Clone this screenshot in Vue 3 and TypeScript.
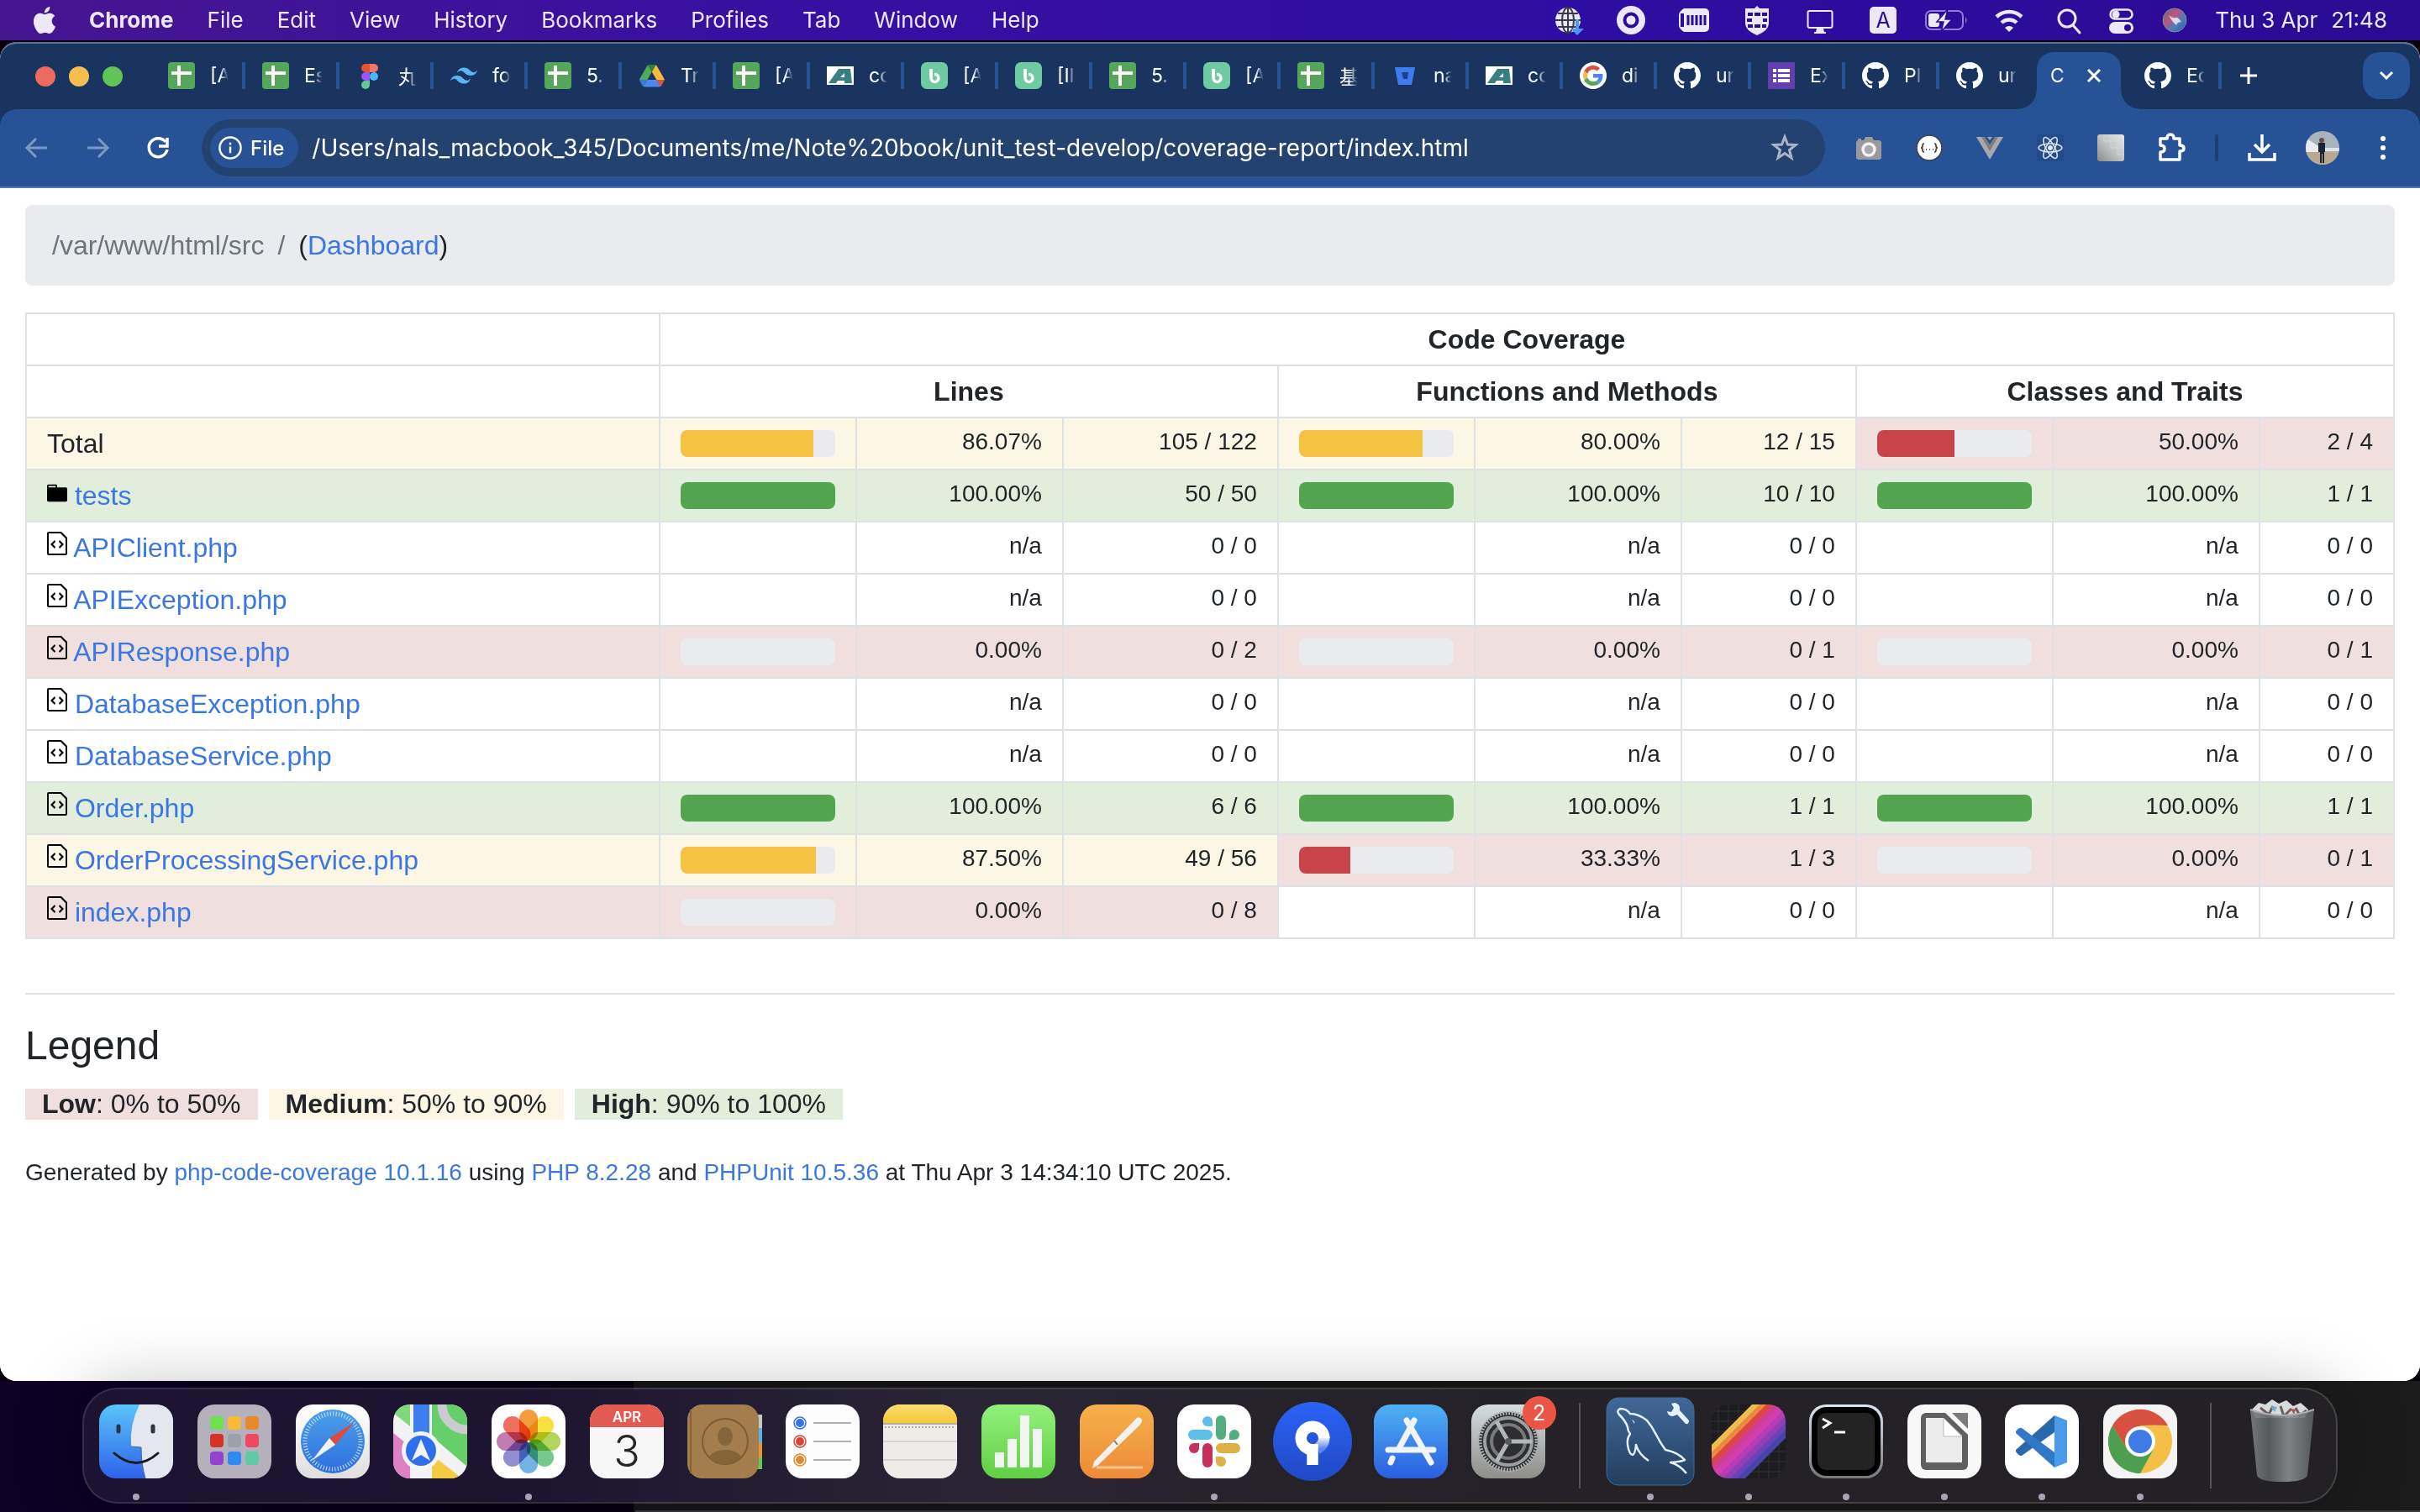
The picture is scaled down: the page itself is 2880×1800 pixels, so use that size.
<script setup lang="ts">
interface Tab { icon: string; title: string; active?: boolean; noSeparator?: boolean }
interface Metric { pct: string; count: string; level: '' | 'low' | 'medium' | 'high' }
interface Row { name: string; kind: 'total' | 'folder' | 'file'; level: string; metrics: Metric[] }
interface DockItem { icon: string; label: string; running?: boolean; badge?: string }

const menus = ['File', 'Edit', 'View', 'History', 'Bookmarks', 'Profiles', 'Tab', 'Window', 'Help']
const statusIcons = ['globe', 'ring', 'keyboard', 'shield', 'display', 'input', 'battery', 'wifi']
const systemIcons = ['search', 'control', 'siri']

const tabs: Tab[] = [
  { icon: 'sheets', title: '[A' }, { icon: 'sheets', title: 'Es' }, { icon: 'figma', title: '丸' },
  { icon: 'tailwind', title: 'fo' }, { icon: 'sheets', title: '5.' }, { icon: 'drive', title: 'Tr' },
  { icon: 'sheets', title: '[A' }, { icon: 'alpha', title: 'co' }, { icon: 'backlog', title: '[A' },
  { icon: 'backlog', title: '[II' }, { icon: 'sheets', title: '5.' }, { icon: 'backlog', title: '[A' },
  { icon: 'sheets', title: '基' }, { icon: 'bitbucket', title: 'na' }, { icon: 'alpha', title: 'co' },
  { icon: 'google', title: 'di' }, { icon: 'github', title: 'ur' }, { icon: 'forms', title: 'Ex' },
  { icon: 'github', title: 'Pl' }, { icon: 'github', title: 'ur', noSeparator: true },
  { icon: '', title: 'C', active: true }, { icon: 'github', title: 'Ec' },
]

const url = '/Users/nals_macbook_345/Documents/me/Note%20book/unit_test-develop/coverage-report/index.html'
const extensions = ['camera', 'json', 'vue', 'react', 'mosaic', 'puzzle']
const groups = ['Lines', 'Functions and Methods', 'Classes and Traits']

function metric(pct: string, count: string): Metric {
  const value = parseFloat(pct)
  const level = isNaN(value) ? '' : value <= 50 ? 'low' : value <= 90 ? 'medium' : 'high'
  return { pct, count, level }
}
function row(name: string, kind: Row['kind'], ...cells: string[]): Row {
  const metrics = [0, 2, 4].map((i) => metric(cells[i], cells[i + 1]))
  return { name, kind, level: metrics[0].level, metrics }
}
const rows: Row[] = [
  row('Total', 'total', '86.07%', '105 / 122', '80.00%', '12 / 15', '50.00%', '2 / 4'),
  row('tests', 'folder', '100.00%', '50 / 50', '100.00%', '10 / 10', '100.00%', '1 / 1'),
  row('APIClient.php', 'file', 'n/a', '0 / 0', 'n/a', '0 / 0', 'n/a', '0 / 0'),
  row('APIException.php', 'file', 'n/a', '0 / 0', 'n/a', '0 / 0', 'n/a', '0 / 0'),
  row('APIResponse.php', 'file', '0.00%', '0 / 2', '0.00%', '0 / 1', '0.00%', '0 / 1'),
  row('DatabaseException.php', 'file', 'n/a', '0 / 0', 'n/a', '0 / 0', 'n/a', '0 / 0'),
  row('DatabaseService.php', 'file', 'n/a', '0 / 0', 'n/a', '0 / 0', 'n/a', '0 / 0'),
  row('Order.php', 'file', '100.00%', '6 / 6', '100.00%', '1 / 1', '100.00%', '1 / 1'),
  row('OrderProcessingService.php', 'file', '87.50%', '49 / 56', '33.33%', '1 / 3', '0.00%', '0 / 1'),
  row('index.php', 'file', '0.00%', '0 / 8', 'n/a', '0 / 0', 'n/a', '0 / 0'),
]

const dockApps: DockItem[] = [
  { icon: 'finder', label: 'Finder', running: true }, { icon: 'launchpad', label: 'Launchpad' },
  { icon: 'safari', label: 'Safari' }, { icon: 'maps', label: 'Maps' },
  { icon: 'photos', label: 'Photos', running: true }, { icon: 'calendar', label: 'Calendar' },
  { icon: 'contacts', label: 'Contacts' }, { icon: 'reminders', label: 'Reminders' },
  { icon: 'notes', label: 'Notes' }, { icon: 'numbers', label: 'Numbers' },
  { icon: 'pages', label: 'Pages' }, { icon: 'slack', label: 'Slack', running: true },
  { icon: 'sourcetree', label: 'Sourcetree' }, { icon: 'appstore', label: 'App Store' },
  { icon: 'settings', label: 'System Settings', badge: '2' },
]
const dockRecent: DockItem[] = [
  { icon: 'mysql', label: 'MySQL Workbench', running: true }, { icon: 'stripes', label: 'Stripes', running: true },
  { icon: 'terminal', label: 'Terminal', running: true }, { icon: 'office', label: 'LibreOffice', running: true },
  { icon: 'vscode', label: 'Visual Studio Code', running: true }, { icon: 'chrome', label: 'Google Chrome', running: true },
]
const dockGroups: DockItem[][] = [dockApps, dockRecent, [{ icon: 'trash', label: 'Trash' }]]

const petals = ['#f28a1c', '#f3dc1f', '#a5cf3f', '#5fbf77', '#5aa5dd', '#7f78c9', '#b765a5', '#ee5340']
const launchTiles = ['#6fe052', '#f7bb35', '#e8892b', '#d63326', '#9aa2a8', '#ec4a62', '#9244cf', '#2f8bf0', '#5fc9a4']
const stripeBands = [
  [48, 57, '#efbd4f'], [57, 65, '#e98a40'], [65, 73, '#dd4540'], [73, 82, '#cf3f8c'], [82, 92, '#d33fae'],
  [92, 101, '#b83db4'], [101, 110, '#913fb6'], [110, 118, '#6a44b8'], [118, 127, '#4b43ac'],
] as [number, number, string][]
</script>

<template>
  <svg class="sprite" aria-hidden="true">
    <defs>
      <clipPath id="squircle"><rect width="88" height="88" rx="20" /></clipPath>
      <clipPath id="disc"><circle cx="20" cy="20" r="20" /></clipPath>
      <linearGradient id="g-blue" x2="0" y2="1"><stop offset="0" stop-color="#5ac4fa" /><stop offset="1" stop-color="#2f62ea" /></linearGradient>
      <linearGradient id="g-safari" x2="0" y2="1"><stop offset="0" stop-color="#4aa0ea" /><stop offset="1" stop-color="#2f6fdd" /></linearGradient>
      <linearGradient id="g-white" x2="0" y2="1"><stop offset="0" stop-color="#ffffff" /><stop offset="1" stop-color="#dedede" /></linearGradient>
      <linearGradient id="g-store" x2="0" y2="1"><stop offset="0" stop-color="#4fb1f3" /><stop offset="1" stop-color="#2a5fe0" /></linearGradient>
      <linearGradient id="g-green" x2="0" y2="1"><stop offset="0" stop-color="#93f07c" /><stop offset="1" stop-color="#5fd043" /></linearGradient>
      <linearGradient id="g-orange" x2="0" y2="1"><stop offset="0" stop-color="#f5b14b" /><stop offset="1" stop-color="#ee8a38" /></linearGradient>
      <linearGradient id="g-yellow" x2="0" y2="1"><stop offset="0" stop-color="#fbdc70" /><stop offset="1" stop-color="#f6c838" /></linearGradient>
      <linearGradient id="g-tree" x2="0" y2="1"><stop offset="0" stop-color="#2a63f6" /><stop offset="1" stop-color="#2049c4" /></linearGradient>
      <linearGradient id="g-fade" x2="0" y2="1"><stop offset="0" stop-color="#ffffff" /><stop offset="1" stop-color="#5f86ee" /></linearGradient>
      <linearGradient id="g-mysql" x2="0" y2="1"><stop offset="0" stop-color="#41689a" /><stop offset="1" stop-color="#233e5c" /></linearGradient>
      <linearGradient id="g-steel" x2="0" y2="1"><stop offset="0" stop-color="#d5dde2" /><stop offset="1" stop-color="#8e8d89" /></linearGradient>
      <linearGradient id="g-term" x2="0" y2="1"><stop offset="0" stop-color="#d8e6f6" /><stop offset="1" stop-color="#77777a" /></linearGradient>
      <linearGradient id="g-bin"><stop offset="0" stop-color="#7c8083" /><stop offset=".3" stop-color="#5c6063" /><stop offset=".6" stop-color="#8a8e91" /><stop offset="1" stop-color="#5a5d60" /></linearGradient>
      <linearGradient id="g-mosaic" x1="0" y1="1" x2="1" y2="0"><stop offset="0" stop-color="#8a8a8a" /><stop offset=".5" stop-color="#c3c3c3" /><stop offset="1" stop-color="#e6e6e6" /></linearGradient>
      <linearGradient id="g-siri" x2="1" y2="1"><stop offset="0" stop-color="#3f7a72" /><stop offset=".35" stop-color="#c2527f" /><stop offset=".65" stop-color="#4a7fb4" /><stop offset="1" stop-color="#3c4fa8" /></linearGradient>

      <!-- Menu bar, 40 × 40 -->
      <g id="s-globe"><circle cx="20" cy="20" r="15" fill="#e9e4f4" /><g fill="none" stroke="#3a3a46" stroke-width="2"><ellipse cx="20" cy="20" rx="7" ry="15" /><path d="M5 20h30M20 5v30M8 12h24M8 28h24" /></g><path d="M33 19v11h6l-8 8-8-8h6V19z" fill="#4a97f5" /></g>
      <g id="s-ring"><circle cx="20" cy="20" r="17" fill="#ece8f8" /><circle cx="20" cy="20" r="7.500" fill="none" stroke="#2b0c98" stroke-width="4" /></g>
      <g id="s-keyboard"><path d="M8 6h25a5 5 0 0 1 5 5v18a5 5 0 0 1-5 5H8q-6-4-6-8V14q0-4 6-8z" fill="#ece8f8" /><path d="M6 12v16" stroke="#2b0c98" stroke-width="4" /><path d="M13 14v12M18 14v12M23 14v12M28 14v12M33 14v12" stroke="#2b0c98" stroke-width="3" /></g>
      <g id="s-shield"><path d="M20 3l3 3h11v18q0 8-14 14Q6 32 6 24V6h11z" fill="#ece8f8" /><g fill="#2b0c98"><path d="M9 11h6v4H9zM17 11h7v4h-7zM26 11h6v4h-6zM8 18h6v4H8zM27 18h5v4h-5zM9 25h6v4H9zM17 25h7v4h-7zM26 25h5v4h-5z" /></g></g>
      <g id="s-display"><rect x="5.500" y="9" width="29" height="20" rx="2" fill="none" stroke="#ece8f8" stroke-width="2" /><path d="M16 30h8l1 4h2v2H13v-2h2z" fill="#ece8f8" /></g>
      <g id="s-input"><rect x="4" y="4" width="32" height="32" rx="5" fill="#ece8f8" /><text x="20" y="29" text-anchor="middle" font-family="Inter, sans-serif" font-size="25" fill="#2b0c98">A</text></g>
      <g id="s-battery"><rect x="-4" y="9" width="44" height="22" rx="6" fill="none" stroke="#8e7cd0" stroke-width="2" /><path d="M43 16q3 4 0 8z" fill="#8e7cd0" /><rect x="-1" y="12" width="13" height="16" rx="3" fill="#ece8f8" /><path d="M22 7L9 22h8l-3 12 13-15h-8z" fill="#ece8f8" stroke="#2b0c98" stroke-width="1.500" /></g>
      <g id="s-wifi" fill="none" stroke="#ece8f8" stroke-width="4.500"><path d="M5 16a22 22 0 0 1 30 0M11 23a13 13 0 0 1 18 0" /><path d="M20 34l-5-5a7 7 0 0 1 10 0z" fill="#ece8f8" stroke="none" /></g>
      <g id="s-search" fill="none" stroke="#ece8f8" stroke-width="3"><circle cx="20" cy="18" r="10" /><path d="M27 26l8 9" stroke-linecap="round" /></g>
      <g id="s-control"><rect x="7.500" y="7.500" width="26" height="11" rx="5.500" fill="none" stroke="#ece8f8" stroke-width="2.500" /><circle cx="14" cy="13" r="4.500" fill="#ece8f8" /><rect x="6" y="22" width="29" height="14" rx="7" fill="#ece8f8" /><circle cx="28" cy="29" r="4" fill="#2b0c98" /></g>
      <g id="s-siri"><circle cx="20" cy="20" r="14" fill="url(#g-siri)" stroke="#7a8b9e" /><path d="M13 14q5 4 8 3t7 5q-5 0-6 4-5-4-9-12z" fill="#fff" opacity=".75" /></g>

      <!-- Favicons, 32 × 32 -->
      <g id="f-sheets"><rect width="32" height="32" rx="4" fill="#57a55a" /><path d="M13 4v24M4 13h24" stroke="#fff" stroke-width="4" /></g>
      <g id="f-figma"><path d="M16 2h-5a5 5 0 0 0 0 10h5z" fill="#e5532d" /><path d="M16 2h5a5 5 0 0 1 0 10h-5z" fill="#f0776a" /><path d="M16 12h-5a5 5 0 0 0 0 10h5z" fill="#9a56f5" /><circle cx="21" cy="17" r="5" fill="#4fb7f7" /><path d="M16 22h-5a5 5 0 1 0 5 5z" fill="#5fce8c" /></g>
      <g id="f-tailwind" transform="scale(1.333)"><path fill="#5cb5f2" d="M12 4.800c-3.200 0-5.200 1.600-6 4.800 1.200-1.600 2.600-2.200 4.200-1.800.913.228 1.565.89 2.288 1.624C13.666 10.618 15.027 12 18 12c3.200 0 5.200-1.600 6-4.800-1.200 1.600-2.600 2.200-4.200 1.800-.913-.228-1.565-.89-2.288-1.624C16.337 6.182 14.976 4.800 12 4.800zM6 12c-3.200 0-5.200 1.600-6 4.800 1.200-1.600 2.600-2.200 4.200-1.800.913.228 1.565.89 2.288 1.624C7.666 17.818 9.027 19.200 12 19.200c3.200 0 5.200-1.600 6-4.800-1.200 1.600-2.600 2.200-4.200 1.800-.913-.228-1.565-.89-2.288-1.624C10.337 13.382 8.976 12 6 12z" /></g>
      <g id="f-drive" transform="translate(1 3) scale(.34)"><path d="m6.600 66.850 3.850 6.650c.8 1.400 1.950 2.500 3.300 3.300l13.750-23.800h-27.500c0 1.550.4 3.100 1.200 4.500z" fill="#3f74d8" /><path d="m43.650 25-13.750-23.800c-1.350.8-2.500 1.900-3.300 3.300l-25.400 44a9 9 0 0 0-1.200 4.500h27.500z" fill="#4faa5a" /><path d="m73.550 76.800c1.350-.8 2.500-1.900 3.300-3.300l9.250-16c.8-1.400 1.200-2.950 1.200-4.500h-27.500l5.850 11.500z" fill="#e5533d" /><path d="m43.650 25 13.750-23.800c-1.350-.8-2.900-1.200-4.500-1.200h-18.500c-1.600 0-3.150.45-4.500 1.200z" fill="#2f7f3a" /><path d="m59.800 53h-32.300l-13.750 23.800c1.350.8 2.900 1.200 4.500 1.200h50.800c1.600 0 3.150-.45 4.500-1.200z" fill="#4c88f0" /><path d="m73.400 26.500-12.700-22c-.8-1.400-1.950-2.500-3.300-3.300l-13.750 23.800 16.150 28h27.450c0-1.550-.4-3.100-1.200-4.500z" fill="#f5bb3c" /></g>
      <g id="f-alpha"><rect y="5" width="32" height="22" fill="#fff" /><path d="M2 25L14 8h14l2 17h-9v-3h-8l-2 3zM16 18h5v-5z" fill="#3a7f83" fill-rule="evenodd" /></g>
      <g id="f-backlog"><rect width="32" height="32" rx="7" fill="#6fcaa2" /><path d="M12 8v11a4.500 4.500 0 1 0 4-4.500" fill="none" stroke="#fff" stroke-width="3.500" /></g>
      <g id="f-bitbucket"><path d="M4 6h24l-4 21H8z" fill="#3f7af0" /><path d="M12 12h8l-1 8h-5z" fill="#1d3f8f" /></g>
      <g id="f-google"><circle cx="16" cy="16" r="16" fill="#fff" /><g transform="translate(4 4) scale(.5)"><path fill="#d9503f" d="M24 9.500c3.540 0 6.710 1.220 9.210 3.600l6.850-6.850C35.900 2.380 30.470 0 24 0 14.620 0 6.510 5.380 2.560 13.220l7.980 6.190C12.430 13.720 17.740 9.500 24 9.500z" /><path fill="#4c86ee" d="M46.980 24.550c0-1.570-.15-3.090-.38-4.550H24v9.020h12.940c-.58 2.960-2.260 5.480-4.780 7.180l7.730 6c4.510-4.180 7.090-10.360 7.090-17.650z" /><path fill="#f2bd42" d="M10.530 28.590c-.48-1.450-.76-2.990-.76-4.590s.27-3.140.76-4.590l-7.980-6.190C.92 16.460 0 20.120 0 24c0 3.880.92 7.540 2.560 10.780z" /><path fill="#58a65c" d="M24 48c6.480 0 11.930-2.130 15.890-5.810l-7.730-6c-2.150 1.450-4.920 2.300-8.160 2.300-6.260 0-11.570-4.220-13.470-9.910l-7.980 6.190C6.510 42.620 14.620 48 24 48z" /></g></g>
      <g id="f-github" transform="scale(2)"><path fill="#fff" d="M8 0C3.580 0 0 3.580 0 8c0 3.540 2.290 6.530 5.470 7.590.4.070.55-.17.55-.38 0-.19-.01-.82-.01-1.490-2.010.37-2.530-.49-2.690-.94-.09-.23-.48-.94-.82-1.130-.28-.15-.68-.52-.01-.53.63-.01 1.080.58 1.230.82.72 1.210 1.870.87 2.330.66.07-.52.28-.87.51-1.070-1.780-.2-3.640-.89-3.640-3.950 0-.87.31-1.590.82-2.150-.08-.2-.36-1.020.08-2.120 0 0 .67-.21 2.200.82.64-.18 1.320-.27 2-.27s1.360.09 2 .27c1.530-1.040 2.200-.82 2.200-.82.44 1.100.16 1.920.08 2.120.51.56.82 1.270.82 2.150 0 3.070-1.870 3.750-3.650 3.950.29.25.54.73.54 1.480 0 1.070-.01 1.930-.01 2.200 0 .21.15.46.55.38A8.010 8.010 0 0 0 16 8c0-4.420-3.580-8-8-8z" /></g>
      <g id="f-forms"><rect width="32" height="32" rx="1" fill="#633eb0" /><path d="M6 8h4v4H6zM12 8h14v4H12zM6 14h4v4H6zM12 14h14v4H12zM6 20h4v4H6zM12 20h14v4H12z" fill="#fff" /></g>

      <!-- Toolbar, 40 × 40 -->
      <g id="t-back" fill="none" stroke="#7d97c4" stroke-width="3"><path d="M32 20H9M19 9L8 20l11 11" /></g>
      <g id="t-forward" fill="none" stroke="#7d97c4" stroke-width="3"><path d="M8 20h23M21 9l11 11-11 11" /></g>
      <g id="t-reload" fill="none" stroke="#fff" stroke-width="3.500"><path d="M29 13a11 11 0 1 0 2 9" /><path d="M31 8v10H21" /></g>
      <g id="t-star" fill="none" stroke="#a9b6c9" stroke-width="3"><path d="M20 7l3.500 9 9.500.5-7.500 6 2.500 9.500-8-5.500-8 5.500 2.500-9.500-7.500-6 9.500-.5z" /></g>
      <g id="t-camera"><path d="M14 11l2-4h8l2 4h6a3 3 0 0 1 3 3v17a3 3 0 0 1-3 3H8a3 3 0 0 1-3-3V14a3 3 0 0 1 2-3v-2h4v2z" fill="#9a9a9c" /><circle cx="20" cy="22" r="7" fill="#a9a9ab" stroke="#f2f2f2" stroke-width="3.500" /></g>
      <g id="t-json"><circle cx="20" cy="20" r="15" fill="#fff" stroke="#33415c" stroke-width="1.500" /><path d="M14 15q-2 0-2 2v1q0 2-2 2 2 0 2 2v1q0 2 2 2M26 15q2 0 2 2v1q0 2 2 2-2 0-2 2v1q0 2-2 2M16 22h1M20 22h1M24 22h1" fill="none" stroke="#333" stroke-width="1.500" /></g>
      <g id="t-vue"><path d="M4 7h32L20 34z" fill="#a9a9a9" /><path d="M10 7h6l4 7 4-7h6L20 24z" fill="#7c7f88" /><path d="M14 7h3l3 4 3-4h3l-6 9z" fill="#285296" /></g>
      <g id="t-react"><rect x="4" y="4" width="32" height="32" rx="2" fill="#234a8a" /><g fill="none" stroke="#dfe7f5" stroke-width="1.500"><ellipse cx="20" cy="20" rx="14" ry="5" /><ellipse cx="20" cy="20" rx="14" ry="5" transform="rotate(60 20 20)" /><ellipse cx="20" cy="20" rx="14" ry="5" transform="rotate(120 20 20)" /></g><circle cx="20" cy="20" r="3" fill="#dfe7f5" /></g>
      <g id="t-mosaic"><rect x="4" y="4" width="32" height="32" rx="3" fill="url(#g-mosaic)" /><path d="M12 4v8h8v8h8v8h8M20 4v8h8v8h8" fill="none" stroke="#d4d4d4" /></g>
      <g id="t-puzzle" fill="none" stroke="#fff" stroke-width="3.500"><path d="M7 9h8q0-5 4-5t4 5h7v8q5 0 5 3.500T30 24v10H7v-9q5 0 5-4t-5-4z" stroke-linejoin="round" /></g>
      <g id="t-download" fill="none" stroke="#fff" stroke-width="3.500"><path d="M20 4v20M11 16l9 9 9-9M5 26v8h30v-8" /></g>
      <g id="t-avatar"><g clip-path="url(#disc)"><rect width="40" height="40" fill="#a9b3be" /><path d="M0 8l18 12v6H0z" fill="#e8ebef" /><path d="M18 20h22v4H18z" fill="#dfe3ea" /><rect y="25" width="40" height="15" fill="#b7a793" /><circle cx="19" cy="11" r="3" fill="#6b4c3c" /><path d="M15 14h8v11h-1v13h-2V27h-1v11h-2V25h-2z" fill="#1b2434" /></g></g>
      <g id="t-dots" fill="#fff"><circle cx="20" cy="9" r="3" /><circle cx="20" cy="20" r="3" /><circle cx="20" cy="31" r="3" /></g>
      <g id="t-info"><circle cx="20" cy="20" r="18" fill="none" stroke="#fff" stroke-width="3.500" /><path d="M20 18v11M20 11v4" stroke="#fff" stroke-width="3.500" /></g>

      <!-- Dock, 88 × 88 -->
      <g id="d-finder"><g clip-path="url(#squircle)"><rect width="88" height="88" fill="url(#g-blue)" /><path d="M48 0Q36 24 38 50l12 1q0 20 5 37h33V0z" fill="#e4e7ee" /></g><path d="M38 50l12 1q0 20 5 37" fill="none" stroke="#40669e" /><path d="M23 26v6M64 26v6" stroke="#2b3640" stroke-width="5" stroke-linecap="round" /><path d="M18 58q26 23 52 0" fill="none" stroke="#141a20" stroke-width="3" stroke-linecap="round" /></g>
      <g id="d-launchpad"><rect width="88" height="88" rx="20" fill="#b4b1bd" /><rect v-for="(c, i) in launchTiles" :key="c" :x="15 + (i % 3) * 21" :y="14 + Math.floor(i / 3) * 21" width="16" height="16" rx="4" :fill="c" /></g>
      <g id="d-safari"><rect width="88" height="88" rx="20" fill="url(#g-white)" /><circle cx="44" cy="44" r="38" fill="url(#g-safari)" /><circle cx="44" cy="44" r="33" fill="none" stroke="#cfe2f8" stroke-width="5" stroke-dasharray="1 2.456" /><path d="M70 21L40 40l7 8z" fill="#dd4a42" /><path d="M19 67l28-19-7-8z" fill="#f2f2f2" /></g>
      <g id="d-maps"><g clip-path="url(#squircle)"><rect width="88" height="88" fill="#f2f2f4" /><path d="M0 0h20v26L0 10z" fill="#7fd97c" /><path d="M46 0h42v74L46 38z" fill="#67cf69" /><path d="M0 34l20 16v38H0z" fill="#dd80c4" /><path d="M46 60l36 28H46z" fill="#f5cb44" /><circle cx="88" cy="0" r="30" fill="none" stroke="#c9cbd0" stroke-width="11" /><path d="M24 0h19v50H24z" fill="#3d7df0" /></g><circle cx="33" cy="55" r="23" fill="#f4f5f8" /><circle cx="33" cy="55" r="18" fill="#2f6fee" /><path d="M33 41l11 26-11-7-11 7z" fill="#f2f4f8" /></g>
      <g id="d-photos"><rect width="88" height="88" rx="20" fill="#fff" /><g class="petals"><rect v-for="(c, i) in petals" :key="c" x="33" y="6" width="22" height="37" rx="11" :fill="c" fill-opacity=".85" :transform="`rotate(${i * 45} 44 44)`" /></g></g>
      <g id="d-calendar"><g clip-path="url(#squircle)"><rect width="88" height="88" fill="#f8f7f7" /><rect width="88" height="27" fill="#e35a52" /></g><text x="44" y="21" text-anchor="middle" font-family="Inter, sans-serif" font-weight="600" font-size="17" fill="#fff">APR</text><text x="44" y="74" text-anchor="middle" font-family="Inter, sans-serif" font-weight="300" font-size="52" fill="#262626">3</text></g>
      <g id="d-contacts"><path d="M80 12h9v16h-9z" fill="#c4c6c8" /><path d="M80 28h9v18h-9z" fill="#58b3e6" /><path d="M80 46h9v17h-9z" fill="#f0922f" /><path d="M80 63h9v14h-9z" fill="#65c95a" /><rect width="85" height="88" rx="18" fill="#a37d4b" /><path d="M4 6v76" stroke="#876235" stroke-width="2" /><circle cx="45" cy="44" r="27" fill="none" stroke="#7d5c32" stroke-width="2" /><ellipse cx="45" cy="38" rx="9" ry="11" fill="#84643a" /><path d="M26 62q6-8 19-8t19 8q-8 9-19 9t-19-9z" fill="#84643a" /></g>
      <g id="d-reminders"><rect width="88" height="88" rx="20" fill="#fdfdfd" /><g fill="none" stroke-width="1.500"><circle cx="17" cy="22" r="7" stroke="#3474e8" /><circle cx="17" cy="44" r="7" stroke="#dc4337" /><circle cx="17" cy="66" r="7" stroke="#e08a2c" /></g><circle cx="17" cy="22" r="5" fill="#3474e8" /><circle cx="17" cy="44" r="5" fill="#dc4337" /><circle cx="17" cy="66" r="5" fill="#e08a2c" /><path d="M33 22h45M33 44h45M33 66h45" stroke="#b0b0b2" stroke-width="2" /></g>
      <g id="d-notes"><g clip-path="url(#squircle)"><rect width="88" height="88" fill="#eeece8" /><rect width="88" height="22" fill="url(#g-yellow)" /><path d="M0 23h88" stroke="#b3aea4" stroke-width="2" /><path d="M2 27h84" stroke="#b3aea4" stroke-dasharray="2 2" stroke-width="2" /><path d="M0 44h88M0 66h88" stroke="#d6d4d0" stroke-width="2" /></g></g>
      <g id="d-numbers"><rect width="88" height="88" rx="20" fill="url(#g-green)" /><path d="M16 57h11v18H16zM31 41h11v34H31zM46 13h11v62H46zM61 29h11v46H61z" fill="#f2f6f0" /></g>
      <g id="d-pages"><rect width="88" height="88" rx="20" fill="url(#g-orange)" /><path d="M20 75h55" stroke="#f8c996" stroke-width="3" /><path d="M72 16q4 2 0 8L22 72l-7 4 2-8L66 18q3-4 6-2z" fill="#f3f1ef" /><path d="M41 43l4 5" stroke="#777" stroke-width="2" /></g>
      <g id="d-slack"><rect width="88" height="88" rx="20" fill="#fff" /><g fill="#5fbfe9"><path d="M42 26h-6a6 6 0 1 1 6-6z" /><rect x="13" y="30" width="29" height="12" rx="6" /></g><g fill="#52ae7c"><rect x="46" y="13" width="12" height="29" rx="6" /><path d="M62 42v-6a6 6 0 1 1 6 6z" /></g><g fill="#ddb147"><rect x="46" y="46" width="29" height="12" rx="6" /><path d="M46 62h6a6 6 0 1 1-6 6z" /></g><g fill="#c7305a"><path d="M26 46v6a6 6 0 1 1-6-6z" /><rect x="30" y="46" width="12" height="29" rx="6" /></g></g>
      <g id="d-sourcetree"><circle cx="44" cy="44" r="47" fill="url(#g-tree)" /><path d="M57.750 38v2a13.750 13.750 0 0 1-8 12.500" fill="none" stroke="url(#g-fade)" stroke-width="13.500" /><path d="M57.750 40a13.750 13.750 0 1 0-13.750 13.750v18.250" fill="none" stroke="#fff" stroke-width="13.500" /></g>
      <g id="d-appstore"><rect width="88" height="88" rx="20" fill="url(#g-store)" /><path d="M48 19L29 54M39 19l29 50M17 54h54M22 64l-2 5" stroke="#f1f5fb" stroke-width="7" stroke-linecap="round" /></g>
      <g id="d-settings"><rect width="88" height="88" rx="20" fill="url(#g-steel)" /><circle cx="44" cy="44" r="35" fill="#2e2e30" /><circle cx="44" cy="44" r="34" fill="none" stroke="#a9acae" stroke-width="5" stroke-dasharray="2 1.560" /><circle cx="44" cy="44" r="28" fill="none" stroke="#9da0a2" stroke-width="4" /><circle cx="44" cy="44" r="20" fill="none" stroke="#77797b" stroke-width="4" /><path d="M44 44h28M44 44L30 20M44 44L30 68" stroke="#b4b7b9" stroke-width="5" /><circle cx="44" cy="44" r="4" fill="#55585a" /></g>
      <g id="d-mysql"><rect x="-8" y="-8" width="104" height="104" rx="14" fill="url(#g-mysql)" stroke="#3d6c9c" /><path d="M87 82q-8-10-19-13 14-1 17-3-8-9-23-12-6-8-11-18T40 19Q30 11 20 11q-4-6-12-6-5 3-1 7 8 8 10 15 0 4 3 8-4 6-3 13 2 12 6 12 3-1 4-12 3 11 15 19" fill="none" stroke="#e4f0fa" stroke-width="2.500" stroke-linejoin="round" /><path d="M22 18q4 2 3 5z" fill="#e4f0fa" /><path d="M69-1l3 5-3 5-5-1q1 6 7 6l5-2 10 11q4 1 4-4L79 7q1-8-6-9z" fill="#e4f0fa" /></g>
      <g id="d-stripes"><g clip-path="url(#squircle)"><rect width="88" height="88" fill="#1d1d1f" /><path d="M8 0v88M20 0v88M32 0v88M56 0v88M68 0v88M80 0v88M0 8h88M0 20h88M0 32h88M0 56h88M0 68h88M0 80h88" stroke="#333336" /><path v-for="b in stripeBands" :key="b[0]" :d="`M${b[0] + 10}-10H${b[1] + 11}L${b[1] - 99} 100H${b[0] - 100}z`" :fill="b[2]" /></g></g>
      <g id="d-terminal"><rect width="88" height="88" rx="20" fill="url(#g-term)" /><rect x="3" y="3" width="82" height="82" rx="18" fill="#000" /><rect x="10" y="10" width="68" height="68" rx="10" fill="#232324" /><path d="M16 17l9 5-9 6" fill="none" stroke="#fff" stroke-width="3" /><path d="M30 33h13" stroke="#fff" stroke-width="3" /></g>
      <g id="d-office"><rect width="88" height="88" rx="20" fill="#f8f8f8" /><path d="M22 10h23l27 26v36a6 6 0 0 1-6 6H22a6 6 0 0 1-6-6V16a6 6 0 0 1 6-6z" fill="#5f5f5f" /><path d="M22 16h21l22 21v32H22z" fill="#ececec" /><path d="M43 16l22 22H43z" fill="#fff" stroke="#bbb" /><path d="M53 10h19v19z" fill="#7b7b7b" /></g>
      <g id="d-vscode"><rect width="88" height="88" rx="20" fill="#fff" /><path d="M59 13v20L20 61q-3 1-7-5v-2z" fill="#2a68ad" /><path d="M13 34v-2q4-5 7-4l39 29v18z" fill="#3179c6" /><path d="M59 13l15 6v50l-15 6z" fill="#4a9cea" /></g>
      <g id="d-chrome"><rect width="88" height="88" rx="20" fill="#f4f4f4" /><circle cx="44" cy="44" r="38" fill="#f3bf45" /><path d="M11 25a38 38 0 0 1 66 0q-16-1-33 0L28 53z" fill="#d8503f" /><path d="M11 25a38 38 0 0 0 33 57l16-29-16 8-16-8z" fill="#4c9f50" /><circle cx="44" cy="44" r="18" fill="#fff" /><circle cx="44" cy="44" r="14" fill="#3e7be6" /></g>
      <g id="d-trash"><path d="M8 6L16-2l8 2 8-6 8 5 9-4 8 7 9-4 9 8-4 10H12z" fill="#d9dadb" /><path d="M18 4l10 8 5-10M42 2l4 12 9-9M60 4l5 9 8-6" fill="none" stroke="#6a5f5c" stroke-width="3" /><path d="M30 2l8 1-3 6z" fill="#5db8d2" /><path d="M54 5l6 1-2 6z" fill="#a65544" /><path d="M6 6q38 14 76 0l-8 78q-2 8-30 8t-30-8z" fill="url(#g-bin)" fill-opacity=".9" /><path d="M6 6q38 14 76 0" fill="none" stroke="#aaaeb1" stroke-width="2" /></g>
    </defs>
  </svg>

  <div class="desktop">
    <header class="menubar">
      <button class="apple" aria-label="Apple menu">
        <svg viewBox="0 0 24 24"><path fill="#ece8f8" d="M12.152 6.896c-.948 0-2.415-1.078-3.960-1.040-2.040.027-3.910 1.183-4.961 3.014-2.117 3.675-.546 9.103 1.519 12.090 1.013 1.454 2.208 3.090 3.792 3.039 1.520-.065 2.090-.987 3.935-.987 1.831 0 2.350.987 3.960.948 1.637-.026 2.676-1.480 3.676-2.948 1.156-1.688 1.636-3.325 1.662-3.415-.039-.013-3.182-1.221-3.220-4.857-.026-3.040 2.480-4.494 2.597-4.559-1.429-2.090-3.623-2.324-4.390-2.376-2-.156-3.675 1.090-4.610 1.090zM15.530 3.830c.843-1.012 1.400-2.427 1.245-3.830-1.207.052-2.662.805-3.532 1.818-.78.896-1.454 2.338-1.273 3.714 1.338.104 2.715-.688 3.559-1.701" /></svg>
      </button>
      <nav class="menus">
        <button class="app-name">Chrome</button>
        <button v-for="m in menus" :key="m">{{ m }}</button>
      </nav>
      <div class="status">
        <button v-for="s in statusIcons" :key="s" class="wide" :aria-label="s"><svg viewBox="0 0 40 40"><use :href="`#s-${s}`" /></svg></button>
        <button v-for="s in systemIcons" :key="s" :aria-label="s"><svg viewBox="0 0 40 40"><use :href="`#s-${s}`" /></svg></button>
        <time class="clock"><span>Thu 3 Apr</span><span>21:48</span></time>
      </div>
    </header>

    <main class="window">
      <div class="tabstrip">
        <div class="lights">
          <button class="close" aria-label="Close"></button>
          <button class="minimise" aria-label="Minimise"></button>
          <button class="zoom" aria-label="Zoom"></button>
        </div>
        <div v-for="(t, i) in tabs" :key="i" class="tab" :class="{ active: t.active, plain: t.noSeparator || t.active }">
          <button class="tab-button">
            <svg v-if="t.icon" class="favicon" viewBox="0 0 32 32"><use :href="`#f-${t.icon}`" /></svg>
            <span class="tab-title">{{ t.title }}</span>
          </button>
          <button v-if="t.active" class="tab-close" aria-label="Close tab"><svg viewBox="0 0 20 20"><path d="M3 3l14 14M17 3L3 17" stroke="#fff" stroke-width="3" /></svg></button>
        </div>
        <button class="new-tab" aria-label="New tab"><svg viewBox="0 0 20 20"><path d="M10 0v20M0 10h20" stroke="#fff" stroke-width="3" /></svg></button>
        <button class="tab-search" aria-label="Search tabs"><svg viewBox="0 0 20 20"><path d="M3 6l7 7 7-7" fill="none" stroke="#fff" stroke-width="3" /></svg></button>
      </div>

      <div class="toolbar">
        <button class="tool" aria-label="Back"><svg viewBox="0 0 40 40"><use href="#t-back" /></svg></button>
        <button class="tool" aria-label="Forward"><svg viewBox="0 0 40 40"><use href="#t-forward" /></svg></button>
        <button class="tool" aria-label="Reload"><svg viewBox="0 0 40 40"><use href="#t-reload" /></svg></button>
        <div class="omnibox">
          <button class="chip"><svg viewBox="0 0 40 40"><use href="#t-info" /></svg>File</button>
          <input type="text" :value="url" aria-label="Address" spellcheck="false">
          <button class="star" aria-label="Bookmark this page"><svg viewBox="0 0 40 40"><use href="#t-star" /></svg></button>
        </div>
        <button v-for="e in extensions" :key="e" class="tool" :aria-label="e"><svg viewBox="0 0 40 40"><use :href="`#t-${e}`" /></svg></button>
        <span class="tool-divider"></span>
        <button class="tool" aria-label="Downloads"><svg viewBox="0 0 40 40"><use href="#t-download" /></svg></button>
        <button class="tool" aria-label="Profile"><svg viewBox="0 0 40 40"><use href="#t-avatar" /></svg></button>
        <button class="tool" aria-label="Menu"><svg viewBox="0 0 40 40"><use href="#t-dots" /></svg></button>
      </div>

      <article class="page">
        <nav aria-label="breadcrumb">
          <ol class="breadcrumb">
            <li class="current">/var/www/html/src</li>
            <li class="current">/</li>
            <li>(<a href="#dashboard">Dashboard</a>)</li>
          </ol>
        </nav>

        <table class="coverage">
          <colgroup>
            <col>
            <col class="bar-col"><col class="pct-col"><col class="lines-col">
            <col class="bar-col"><col class="pct-col"><col class="functions-col">
            <col class="bar-col"><col class="pct-col"><col class="classes-col">
          </colgroup>
          <thead>
            <tr><td></td><th colspan="9">Code Coverage</th></tr>
            <tr><td></td><th v-for="g in groups" :key="g" colspan="3">{{ g }}</th></tr>
          </thead>
          <tbody>
            <tr v-for="r in rows" :key="r.name">
              <td :class="r.level">
                <template v-if="r.kind === 'total'">Total</template>
                <template v-else>
                  <svg v-if="r.kind === 'folder'" class="folder-icon" viewBox="0 0 14 16"><path d="M13 4H7V3c0-.66-.31-1-1-1H1c-.55 0-1 .45-1 1v10c0 .55.45 1 1 1h12c.55 0 1-.45 1-1V5c0-.55-.45-1-1-1zM6 4H1V3h5v1z" /></svg>
                  <svg v-else class="file-icon" viewBox="0 0 12 16"><path fill-rule="evenodd" d="M8.500 1H1c-.55 0-1 .45-1 1v12c0 .55.45 1 1 1h10c.55 0 1-.45 1-1V4.500L8.500 1zM11 14H1V2h7l3 3v9zM5 6.980L3.500 8.500 5 10l-.5 1L2 8.500 4.500 6l.5.98zM7.500 6L10 8.500 7.500 11l-.5-.98L8.500 8.500 7 7l.5-1z" /></svg>
                  {{ ' ' }}<a :href="`#${r.name}`">{{ r.name }}</a>
                </template>
              </td>
              <template v-for="(m, i) in r.metrics" :key="i">
                <td :class="m.level">
                  <div v-if="m.level" class="progress"><div class="fill" :style="{ width: m.pct }"></div></div>
                </td>
                <td class="number" :class="m.level">{{ m.pct }}</td>
                <td class="number" :class="m.level">{{ m.count }}</td>
              </template>
            </tr>
          </tbody>
        </table>

        <footer>
          <hr>
          <h4>Legend</h4>
          <p class="legend">
            <span class="low"><strong>Low</strong>: 0% to 50%</span>
            <span class="medium"><strong>Medium</strong>: 50% to 90%</span>
            <span class="high"><strong>High</strong>: 90% to 100%</span>
          </p>
          <p>
            <small>Generated by <a href="#pcc">php-code-coverage 10.1.16</a> using <a href="#php">PHP 8.2.28</a> and <a href="#phpunit">PHPUnit 10.5.36</a> at Thu Apr 3 14:34:10 UTC 2025.</small>
          </p>
        </footer>
      </article>
    </main>

    <div class="dock-area">
      <nav class="dock" aria-label="Dock">
        <template v-for="(g, gi) in dockGroups" :key="gi">
          <span v-if="gi" class="dock-divider"></span>
          <button v-for="d in g" :key="d.icon" class="dock-item" :class="{ running: d.running }" :aria-label="d.label">
            <svg viewBox="0 0 88 88"><use :href="`#d-${d.icon}`" /></svg>
            <span v-if="d.badge" class="badge">{{ d.badge }}</span>
          </button>
        </template>
      </nav>
    </div>
  </div>
</template>

<style>
body { margin: 0; background: #0a0118; }
</style>

<style scoped>
.sprite { position: absolute; width: 0; height: 0; }
.petals rect { mix-blend-mode: multiply; }
svg { display: block; overflow: visible; }
button { padding: 0; border: 0; background: none; color: inherit; font: inherit; }
.desktop {
  display: flex;
  flex-direction: column;
  min-height: 100vh;
  background: #05010c;
  font-family: Inter, "Noto Sans CJK JP", sans-serif;
  color: #fff;
}

.menubar {
  display: flex;
  align-items: center;
  height: 48px;
  padding: 0 39px 0 36px;
  background: linear-gradient(90deg, #461590, #3710a2 33%, #2e0da2 66%, #2a0b92);
  color: #ece8f8;
  font-size: 26px;
}
.apple { margin-right: 36px; }
.apple svg { width: 34px; height: 32px; }
.menus { display: flex; gap: 40px; padding-bottom: 2px; }
.app-name { font-weight: 700; }
.status { display: flex; align-items: center; margin-left: auto; }
.status button { display: flex; justify-content: center; width: 64px; }
.status .wide { width: 75px; }
.status svg { width: 40px; height: 40px; }
.clock { display: flex; gap: 16px; padding: 0 0 2px 16px; }

.window {
  display: flex;
  flex: 1;
  flex-direction: column;
  margin-top: 2px;
  overflow: hidden;
  border-radius: 20px;
  background: #fff;
}
.tabstrip {
  display: flex;
  align-items: center;
  height: 80px;
  padding-right: 12px;
  border-radius: 20px 20px 0 0;
  background: #19355f;
  box-shadow: inset 0 2px #61728f, 0 20px #19355f;
  font-size: 23px;
}
.lights { display: flex; gap: 16px; padding: 2px 34px 0 42px; }
.lights button { width: 24px; height: 24px; border-radius: 50%; }
.close { background: #ed6a5f; }
.minimise { background: #f5bf4f; }
.zoom { background: #61c455; }
.tab { display: flex; align-items: center; box-sizing: border-box; width: 112px; height: 32px; padding-left: 20px; border-right: 4px solid #285296; }
.tab.plain { border-right-color: transparent; }
.tab-button { display: flex; align-items: center; gap: 18px; }
.favicon { width: 32px; height: 32px; }
.tab-title { width: 24px; overflow: hidden; white-space: nowrap; text-align: left; mask-image: linear-gradient(90deg, #000 50%, transparent 90%); }
.tab.active {
  position: relative;
  align-self: flex-end;
  justify-content: space-between;
  width: 100px;
  height: 68px;
  margin: 0 8px 0 4px;
  padding: 0 22px 12px 16px;
  border: 0;
  border-radius: 20px 20px 0 0;
  background: #285296;
}
.tab.active::before, .tab.active::after { content: ""; position: absolute; bottom: 0; width: 22px; height: 22px; }
.tab.active::before { right: 100%; background: radial-gradient(circle at 0 0, transparent 21px, #285296 22px); }
.tab.active::after { left: 100%; background: radial-gradient(circle at 100% 0, transparent 21px, #285296 22px); }
.tab-close svg, .new-tab svg, .tab-search svg { width: 20px; height: 20px; }
.new-tab { margin-left: 22px; }
.tab-search { display: flex; align-items: center; justify-content: center; width: 56px; height: 56px; margin-left: auto; border-radius: 20px; background: #285296; }

.toolbar {
  display: flex;
  position: relative;
  align-items: center;
  height: 92px;
  padding: 0 8px;
  border-bottom: 2px solid #5377ad;
  border-radius: 20px 20px 0 0;
  background: #285296;
}
.tool { display: flex; flex: none; justify-content: center; width: 72px; }
.tool svg { width: 40px; height: 40px; }
.tool-divider { flex: none; width: 4px; height: 32px; margin: 0 16px; border-radius: 2px; background: #1e3d73; }
.omnibox { display: flex; flex: 1; align-items: center; box-sizing: border-box; height: 68px; margin: 0 16px; padding: 0 28px 0 10px; border-radius: 34px; background: #23426f; }
.chip { display: flex; align-items: center; gap: 10px; height: 48px; padding: 0 17px 0 10px; border-radius: 24px; background: #285296; font-size: 24px; font-weight: 500; }
.chip svg { width: 28px; height: 28px; }
.omnibox input { flex: 1; min-width: 0; margin-left: 16px; padding: 0; border: 0; outline: 0; background: none; color: #fff; font: 28px Inter, sans-serif; }
.star svg { width: 40px; height: 40px; }

.page { flex: 1; padding: 20px 30px; background: #fff; color: #212529; font: 32px/48px "Liberation Sans", Arial, sans-serif; }
.page a { color: #3b77e4; text-decoration: none; }
.breadcrumb { display: flex; gap: 16px; margin: 0 0 32px; padding: 24px 32px; border-radius: 8px; background: #e9ebef; list-style: none; }
.current { color: #6c757d; }
.coverage { width: 100%; table-layout: fixed; border-collapse: collapse; }
.bar-col { width: 234px; }
.pct-col { width: 246px; }
.lines-col { width: 256px; }
.functions-col { width: 208px; }
.classes-col { width: 160px; }
.coverage td, .coverage th { height: 48px; padding: 6px 24px; border: 2px solid #dee2e6; vertical-align: top; }
.coverage th { text-align: center; }
.coverage .number { font-size: 28px; line-height: 44px; text-align: right; white-space: nowrap; }
.folder-icon, .file-icon { display: inline-block; width: 24px; fill: #000; vertical-align: baseline; }
.folder-icon { height: 28px; }
.file-icon { height: 32px; }
.low { background: #efdfdf; }
.medium { background: #fbf7e4; }
.high { background: #e1eedb; }
.progress { height: 32px; margin: 8px 0; overflow: hidden; border-radius: 8px; background: #e9ebef; }
.fill { height: 100%; }
.low .fill { background: #c94449; }
.medium .fill { background: #f6c244; }
.high .fill { background: #53a451; }
footer hr { height: 2px; margin: 64px 0 32px; border: 0; background: #dfe1e4; }
footer h4 { margin: 0 0 16px; font-size: 48px; font-weight: 400; line-height: 58px; }
footer p { margin: 0 0 32px; }
.legend { display: flex; gap: 13px; align-items: center; height: 48px; }
.legend span { padding: 0 20px; line-height: 37px; }
footer small { font-size: 28px; }

.dock-area {
  flex: none;
  padding: 8px 98px 10px;
  background:
    linear-gradient(#3a373f, #3a373f) 756px 100% / 100% 2px no-repeat,
    linear-gradient(90deg, #0e0128, #06010f 754px, #16151a 754px, #16151a 1444px, #171717 1444px, #1b1b1b);
}
.dock {
  display: flex;
  position: relative;
  align-items: center;
  box-sizing: border-box;
  height: 138px;
  padding: 0 6px 0 4px;
  border: 2px solid rgba(255, 255, 255, .18);
  border-radius: 42px;
  background: linear-gradient(90deg, #1b1330, #1d1530 20%, #2a2534 40%, #252229 55%, #232125);
  background-clip: padding-box;
  box-shadow: 0 0 80px rgba(0, 0, 0, .25);
}
.dock-item { display: flex; position: relative; flex: 1; align-items: center; justify-content: center; height: 134px; padding-bottom: 10px; box-sizing: border-box; }
.dock-item svg { width: 88px; height: 88px; }
.running::after { content: ""; position: absolute; bottom: 2px; left: 50%; width: 8px; height: 8px; margin-left: -4px; border-radius: 50%; background: #a9a3b4; }
.dock-divider { flex: none; width: 2px; height: 102px; margin: 0 25px; background: #55525a; }
.badge { position: absolute; top: 8px; right: 2px; width: 40px; height: 40px; border-radius: 50%; background: #ea5545; color: #fff; font-size: 25px; line-height: 40px; text-align: center; }
</style>
